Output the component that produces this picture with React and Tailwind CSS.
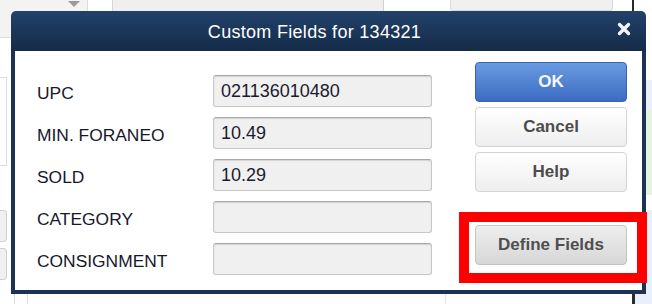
import React from 'react';

const fields = [
    { label: 'UPC', value: '021136010480' },
    { label: 'MIN. FORANEO', value: '10.49' },
    { label: 'SOLD', value: '10.29' },
    { label: 'CATEGORY', value: '' },
    { label: 'CONSIGNMENT', value: '' },
];

const CloseIcon = () => (
    <svg width="14" height="14" viewBox="0 0 14 14">
        <path d="M2.5 2.5 L11.5 11.5 M11.5 2.5 L2.5 11.5" stroke="#f2f4f8" strokeWidth="3.4" strokeLinecap="round" />
    </svg>
);

const DialogButton = ({ children, variant = 'plain', className = '' }) => {
    const styles = {
        primary: 'bg-gradient-to-b from-[#6a9be0] to-[#3c6bc1] border-[#3961b2] text-[#f4f7ff]',
        plain: 'bg-gradient-to-b from-[#ffffff] to-[#eeeeee] border-[#d3d3d3] text-[#4c4c4c]',
        gray: 'bg-gradient-to-b from-[#eeeeee] to-[#d7d7d7] border-[#c4c4c4] text-[#4f4f4f]',
    };
    return (
        <button className={`h-[40px] w-[152px] rounded-[4px] border text-[17px] font-bold flex items-center justify-center ${styles[variant]} ${className}`}>
            {children}
        </button>
    );
};

export default function App() {
    return (
        <div className="relative w-[652px] h-[304px] overflow-hidden bg-white flex flex-col" style={{ fontFamily: '"Liberation Sans", Arial, sans-serif' }}>
            {/* page behind the dialog: top strip */}
            <div className="h-[11px] flex shrink-0">
                <div className="w-[60px] bg-[#f3f3f3]" />
                <div className="w-[27px] bg-[#f3f3f3] flex justify-center">
                    <div className="mt-[1px] w-0 h-0 border-l-[6px] border-r-[6px] border-t-[6px] border-l-transparent border-r-transparent border-t-[#9a9a9a]" />
                </div>
                <div className="w-[25px] bg-white border-l border-[#dcdcdc]" />
                <div className="w-[271px] bg-[#efefef] border-l border-[#d6d6d6]" />
                <div className="w-[67px] bg-white border-l border-[#cfcfcf]" />
                <div className="w-[163px] bg-[#f0f0f0] border border-t-0 border-[#dadada] rounded-b-[3px]" />
                <div className="w-[19px] bg-white" />
                <div className="w-[2px] bg-[#2a2a2a]" />
                <div className="flex-1 bg-white" />
            </div>

            <div className="flex flex-1">
                {/* left strip */}
                <div className="w-[11px] flex flex-col">
                    <div className="h-[27px] bg-[#f3f3f3] border-b border-[#dedede]" />
                    <div className="h-[39px]" />
                    <div className="h-[89px] w-[7px] border-r border-y border-[#dcdcdc] bg-white" />
                    <div className="h-[44px]" />
                    <div className="h-[32px] w-[7px] border-r border-y border-[#cfcfcf] bg-[#f0f0f0] rounded-r-[4px]" />
                    <div className="h-[6px]" />
                    <div className="h-[32px] w-[7px] border-r border-y border-[#cfcfcf] bg-[#f0f0f0] rounded-r-[4px]" />
                </div>

                {/* dialog */}
                <div className="w-[635px] flex flex-col">
                    <div className="h-[40px] rounded-t-[5px] bg-gradient-to-b from-[#22426b] to-[#152b48] flex items-center relative">
                        <div className="flex-1 text-center text-white text-[18px] tracking-[0.3px] pr-[28px] pt-[2px]">
                            Custom Fields for 134321
                        </div>
                        <div className="absolute right-[15px] top-[11px]">
                            <CloseIcon />
                        </div>
                    </div>
                    <div className="flex-1 bg-white border-x-[4px] border-b-[4px] border-[#1c3353] flex">
                        <div className="w-[198px] pl-[22px] pt-[24px] flex flex-col gap-[10px]">
                            {fields.map((f) => (
                                <div key={f.label} className="h-[32px] flex items-center pt-[5px] text-[17.4px] text-[#16182a]">
                                    {f.label}
                                </div>
                            ))}
                        </div>
                        <div className="w-[219px] pt-[24px] flex flex-col gap-[10px]">
                            {fields.map((f) => (
                                <div key={f.label} className="h-[32px] rounded-[3px] border border-[#c6c6c6] border-t-[#a9a9a9] bg-[#f0f0f0] shadow-[inset_0_1px_1px_rgba(0,0,0,0.12)] flex items-center pl-[7px] text-[18px] text-[#1b1b2e]">
                                    {f.value}
                                </div>
                            ))}
                        </div>
                        <div className="pl-[43px] pt-[11px] flex flex-col">
                            <DialogButton variant="primary">OK</DialogButton>
                            <DialogButton className="mt-[5px]">Cancel</DialogButton>
                            <DialogButton className="mt-[5px]">Help</DialogButton>
                            <DialogButton variant="gray" className="mt-[33px]">Define Fields</DialogButton>
                        </div>
                    </div>
                </div>

                {/* right strip */}
                <div className="flex-1 flex flex-col">
                    <div className="h-[69px] bg-white" />
                    <div className="h-[30px] bg-[#e9f0fb]" />
                    <div className="h-[85px] bg-[#e6f3e2]" />
                    <div className="h-[15px] bg-white" />
                    <div className="flex-1 bg-[#e9f0fb]" />
                </div>
            </div>

            {/* bottom strip */}
            <div className="h-[10px] flex shrink-0">
                <div className="w-[14px]" />
                <div className="w-[13px] border-l border-[#d8d8d8]" />
                <div className="w-[418px] border-l border-[#e0e0e0]" />
                <div className="w-[187px] border-l border-[#e4e4e4]" />
                <div className="w-[3px] bg-[#2a2a2a]" />
                <div className="flex-1 bg-[#e9f0fb]" />
            </div>

            {/* red annotation box */}
            <div className="absolute left-[459px] top-[212px] w-[188px] h-[71px] border-[10px] border-[#ff0000]" />
        </div>
    );
}
